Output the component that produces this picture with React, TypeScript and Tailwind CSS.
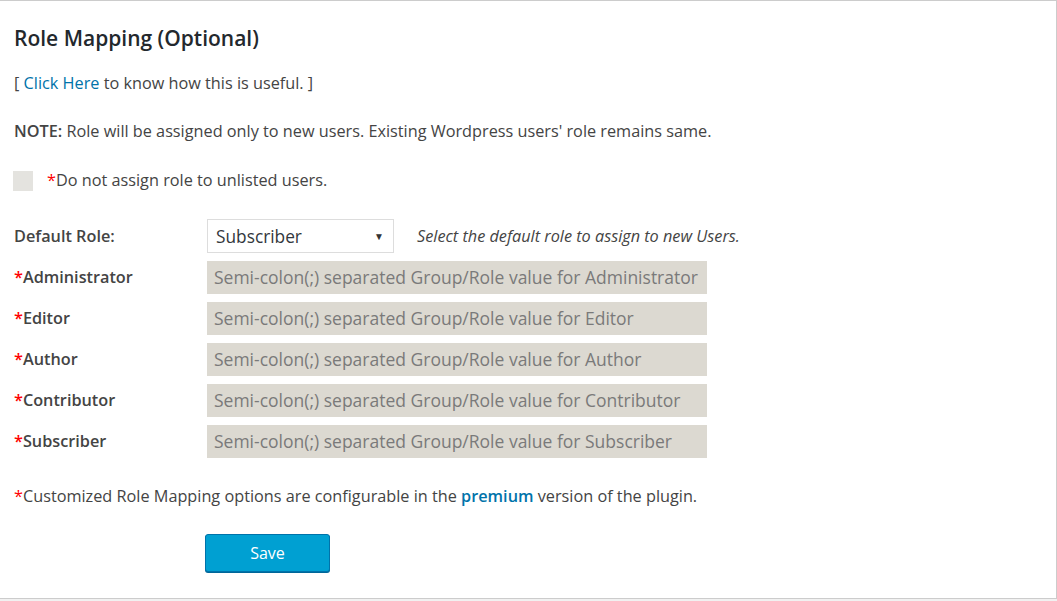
const roles = ["Administrator", "Editor", "Author", "Contributor", "Subscriber"];

export default function App() {
  return (
    <div
      className="h-[601px] w-[1057px] bg-[#f1f1f1] text-[#444]"
      style={{ fontFamily: '"Open Sans", "Noto Sans", sans-serif' }}
    >
      <div className="h-[599px] border-t border-r border-b border-[#ccc] bg-white px-[14px]">
        <h2 className="pt-[22px] text-[21px] leading-[30px] font-semibold text-[#23282d]">
          Role Mapping (Optional)
        </h2>

        <p className="mt-[18px] text-[16.25px] leading-[24px]">
          [ <a className="text-[#0073aa]">Click Here</a> to know how this is useful. ]
        </p>

        <p className="mt-[24px] text-[16.25px] leading-[24px]">
          <b className="font-semibold">NOTE:</b> Role will be assigned only to new users. Existing Wordpress users' role remains same.
        </p>

        <div className="mt-[25px] flex h-[24px] items-center">
          <span className="ml-[-1px] mt-[2px] h-[20px] w-[20px] bg-[#e4e3df]" />
          <span className="ml-[14px] text-[16.25px] leading-[24px]">
            <span className="text-[#ff0000]">*</span>Do not assign role to unlisted users.
          </span>
        </div>

        <div className="mt-[27px] grid grid-cols-[193px_auto] items-center gap-y-2">
          <span className="text-[16.25px] font-semibold">Default Role:</span>
          <div className="flex items-center">
            <div className="flex h-[34px] w-[187px] items-center justify-between border border-[#ddd] bg-white pt-[1px] pl-[8px] pr-[9px] text-[17.3px] text-[#32373c]">
              <span>Subscriber</span>
              <span className="text-[10px] text-[#333]">▼</span>
            </div>
            <span className="ml-[23px] text-[16.25px] italic text-[#444]">
              Select the default role to assign to new Users.
            </span>
          </div>

          {roles.map((role) => (
            <div key={role} className="contents">
              <span className="text-[16.25px] font-semibold">
                <span className="text-[#ff0000]">*</span>
                {role}
              </span>
              <div className="flex h-[33px] w-[500px] items-center bg-[#dcd9d1] px-[7px] text-[17.5px] text-[#7a7a7a]">
                Semi-colon(;) separated Group/Role value for {role}
              </div>
            </div>
          ))}
        </div>

        <p className="mt-[26px] text-[16.25px] leading-[24px]">
          <span className="text-[#ff0000]">*</span>Customized Role Mapping options are configurable in the{" "}
          <b className="font-semibold text-[#0073aa]">premium</b> version of the plugin.
        </p>

        <button className="mt-[26px] ml-[191px] h-[38px] w-[125px] rounded-[3px] border border-[#0073aa] bg-[#00a0d2] text-[16px] text-white shadow-[0_1px_0_#006799]">
          Save
        </button>
      </div>
    </div>
  );
}
